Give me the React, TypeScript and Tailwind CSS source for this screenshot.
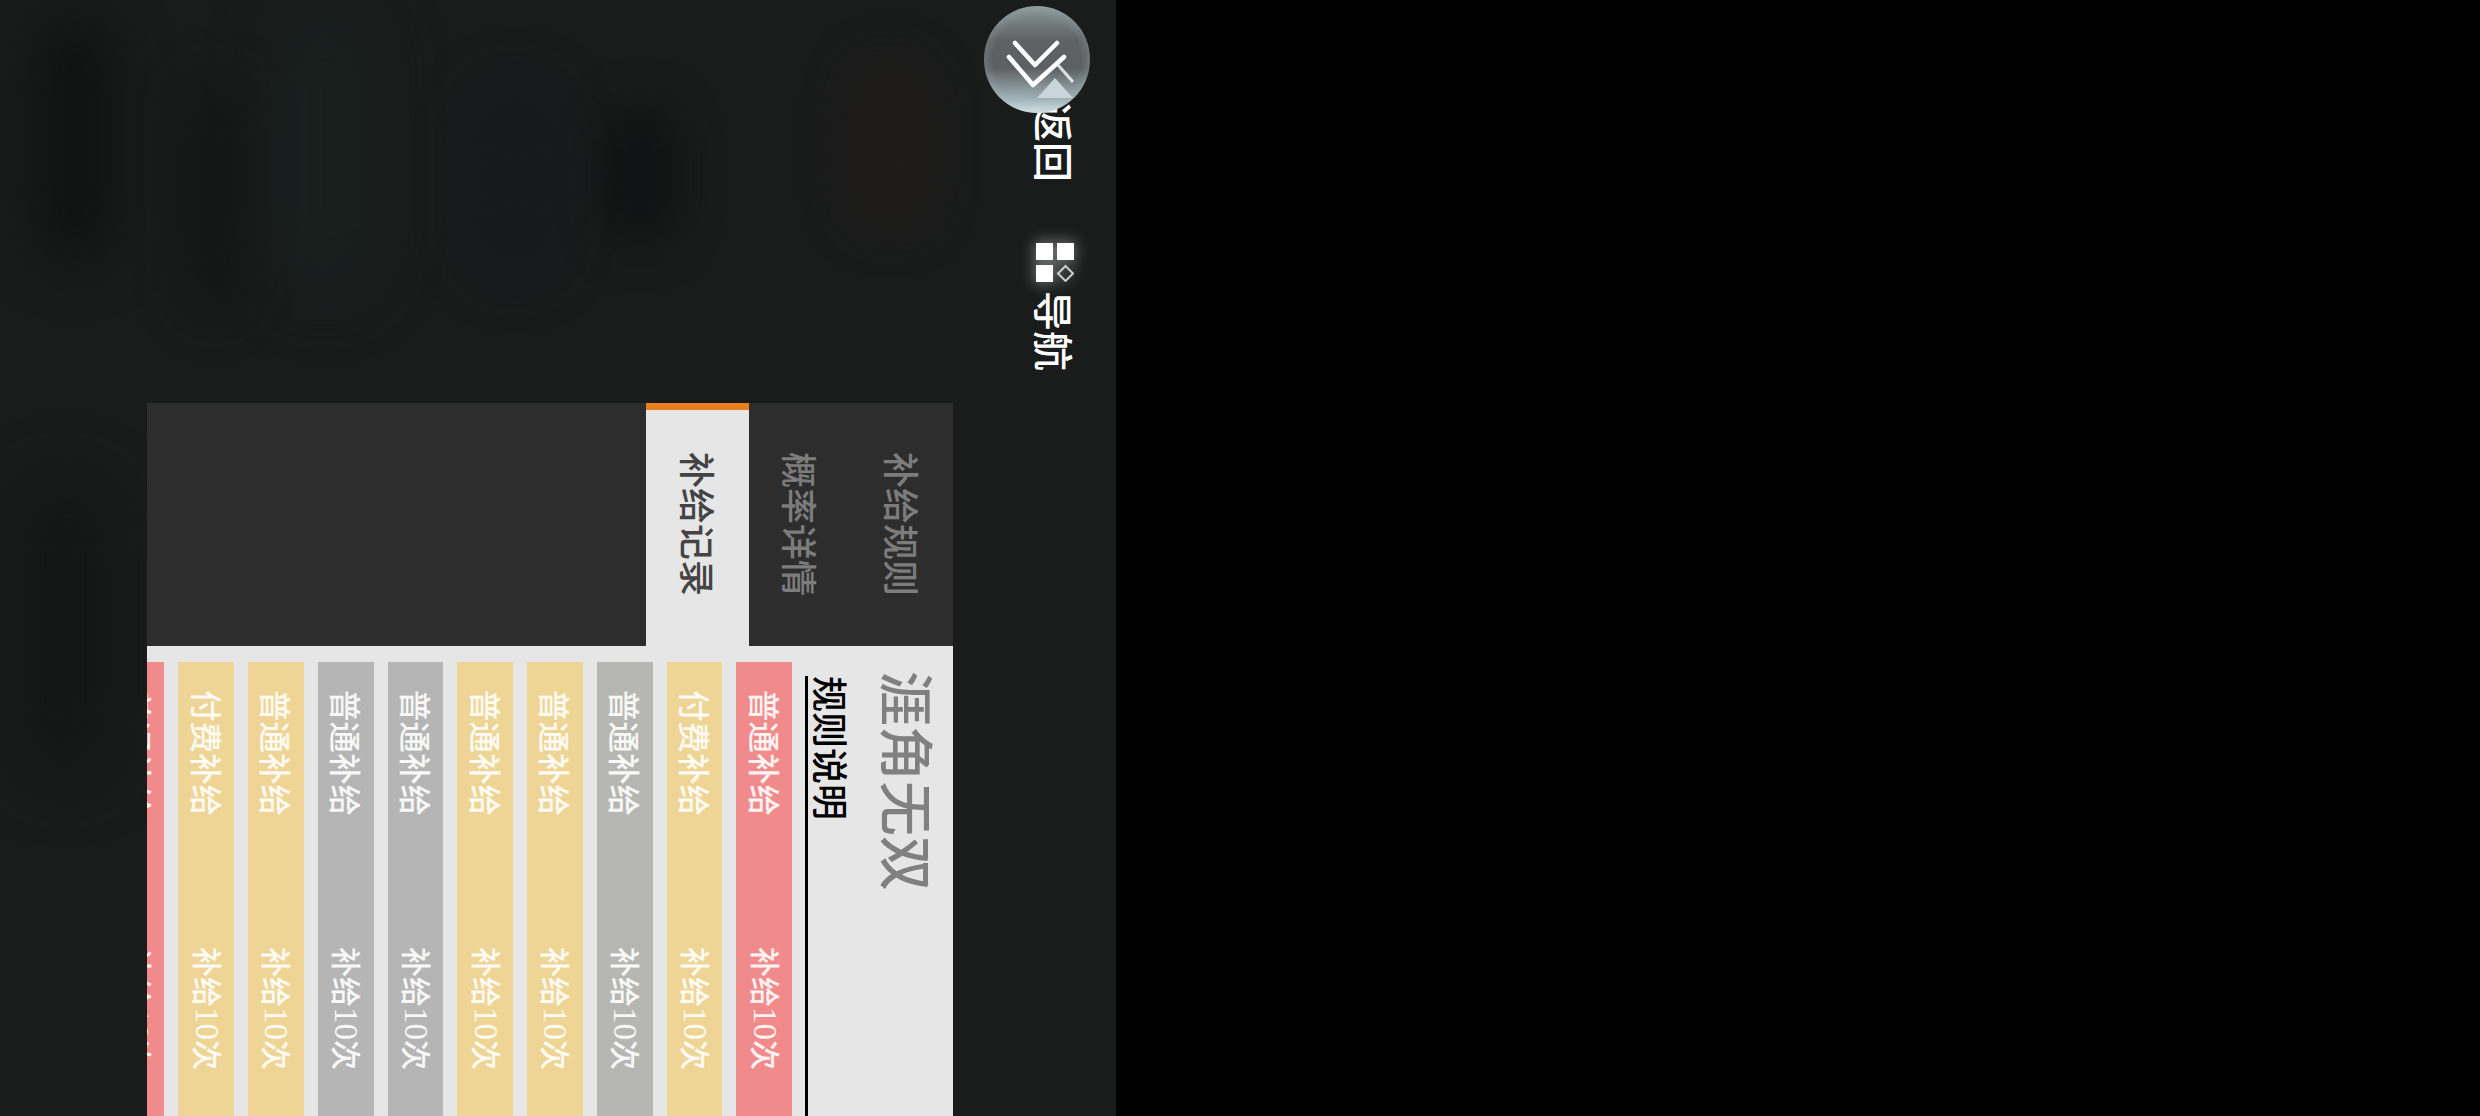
const side = "[writing-mode:vertical-rl] [text-orientation:sideways]";

const rows: { color: string; label: string }[] = [
  { color: "bg-[#f08a8b]", label: "普通补给" },
  { color: "bg-[#eed596]", label: "付费补给" },
  { color: "bg-[#b6b7b3]", label: "普通补给" },
  { color: "bg-[#eed596]", label: "普通补给" },
  { color: "bg-[#eed596]", label: "普通补给" },
  { color: "bg-[#b5b5b5]", label: "普通补给" },
  { color: "bg-[#b5b5b5]", label: "普通补给" },
  { color: "bg-[#eed596]", label: "普通补给" },
  { color: "bg-[#eed596]", label: "付费补给" },
  { color: "bg-[#f08a8b]", label: "普通补给" },
];

function Tab({ label, active }: { label: string; active?: boolean }) {
  return (
    <div
      className={
        active
          ? "w-[102.5px] h-full shrink-0 flex justify-center pl-[3px] pt-[42px] border-t-[7px] border-[#e8801f] bg-[#e6e6e6] text-[#444444]"
          : "w-[102.25px] h-full shrink-0 flex justify-center pl-[3px] pt-[49px] text-[#7c7c7c]"
      }
    >
      <span className={`${side} text-[36px] leading-[36px] font-medium`}>{label}</span>
    </div>
  );
}

export default function App() {
  return (
    <div className="w-[2480px] h-[1116px] flex bg-black overflow-hidden font-['Noto_Sans_CJK_SC',sans-serif]">
      <div className="relative w-[1116px] h-full flex overflow-hidden bg-[#1a1b1b]">
        <div className="absolute left-[40px] top-[20px] w-[70px] h-[240px] rounded-full bg-[#0f1212] blur-[28px]" />
        <div className="absolute left-[270px] top-[0px] w-[110px] h-[300px] rounded-full bg-[#18201e] blur-[28px]" />
        <div className="absolute left-[190px] top-[80px] w-[50px] h-[230px] rounded-full bg-[#131615] blur-[24px]" />
        <div className="absolute left-[610px] top-[110px] w-[60px] h-[130px] rounded-full bg-[#0f1011] blur-[24px]" />
        <div className="absolute left-[480px] top-[90px] w-[70px] h-[180px] rounded-full bg-[#17191e] blur-[28px]" />
        <div className="absolute left-[860px] top-[70px] w-[60px] h-[150px] rounded-full bg-[#201c19] blur-[26px]" />
        <div className="absolute left-[20px] top-[480px] w-[90px] h-[300px] rounded-full bg-[#141716] blur-[30px]" />

        <div className="relative ml-[147px] mt-[403px] w-[806px] h-[713px] shrink-0 flex flex-col">
          <div className="h-[243px] shrink-0 flex flex-row-reverse bg-[#2d2d2d]">
            <Tab label="补给规则" />
            <Tab label="概率详情" />
            <Tab label="补给记录" active />
          </div>
          <div className="flex-1 flex flex-row-reverse bg-[#e6e6e6] overflow-hidden">
            <div className="shrink-0 w-[54px] ml-[33px] mr-[16px] pt-[25px]">
              <span className={`${side} block text-[55px] leading-[54px] font-medium text-[#808080]`}>涯角无双</span>
            </div>
            <div className="shrink-0 w-[45px] mt-[30px] ml-[13px] pl-[6px] border-l-[3px] border-black">
              <span className={`${side} block text-[36px] leading-[36px] font-medium text-black`}>规则说明</span>
            </div>
            <div className="flex flex-row-reverse gap-[14px] mt-[16px] shrink-0">
              {rows.map((r, i) => (
                <div
                  key={i}
                  className={`${r.color} ${side} shrink-0 w-[55.75px] h-[470px] flex items-center pl-[3px] pt-[28px] gap-[131px] text-white/90`}
                >
                  <span className="text-[31.5px] leading-[36px] font-medium whitespace-nowrap">{r.label}</span>
                  <span className="text-[30px] leading-[36px] font-medium whitespace-nowrap">
                    补给<span className="font-['Liberation_Serif',serif] font-normal text-[33px]">10</span>次
                  </span>
                </div>
              ))}
            </div>
          </div>
        </div>

        <div className="ml-[83px] mt-[62px] w-[38px] shrink-0 flex flex-col items-center text-white">
          <svg viewBox="0 0 38 40" className="relative z-10 w-[38px] h-[40px] shrink-0" fill="none">
            <path d="M1 36 L19 16 L37 36 Z" fill="#c8d6da" />
            <path d="M22 3 L37 20" stroke="#d8e2e4" strokeWidth="3" />
          </svg>
          <span className={`${side} text-[40px] leading-[40px] font-medium`}>返回</span>
          <svg viewBox="0 0 38 39" className="relative w-[38px] h-[39px] mt-[61px] shrink-0 drop-shadow-[0_0_8px_rgba(255,255,255,0.55)]">
            <rect x="0" y="0" width="17" height="17" fill="#ffffff" />
            <rect x="21" y="0" width="17" height="17" fill="#ffffff" />
            <rect x="0" y="22" width="17" height="17" fill="#ffffff" />
            <path d="M29.5 23 L37 30.5 L29.5 38 L22 30.5 Z" fill="none" stroke="#cfcfcf" strokeWidth="2" />
          </svg>
          <span className={`${side} mt-[9px] text-[40px] leading-[40px] font-medium`}>导航</span>
        </div>

        <div className="absolute z-[5] left-[984px] top-[6px] w-[106px] h-[107px] rounded-full bg-[radial-gradient(circle,rgba(0,0,0,0)_58%,rgba(165,185,190,0.75)_100%),linear-gradient(180deg,#8b979a_0%,#5f6262_32%,#5d6062_58%,#a3b6bc_88%,#dbe7ea_100%)]" />
        <svg viewBox="0 0 106 107" className="absolute z-20 left-[984px] top-[6px] w-[106px] h-[107px]" fill="none" stroke="#ffffff" strokeWidth="4.5" strokeLinecap="round" strokeLinejoin="round">
          <path d="M31 37 L51 59 L73 37" />
          <path d="M25 51 L49 79 L80 51" />
        </svg>
      </div>
    </div>
  );
}
